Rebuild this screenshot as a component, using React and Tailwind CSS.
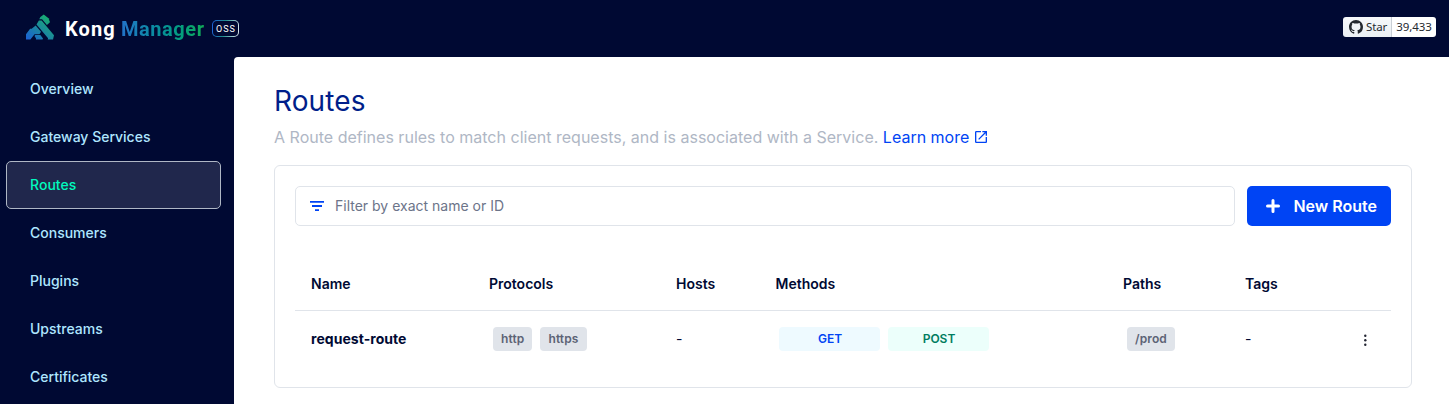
import React from "react";
import { SiKong } from "react-icons/si";
import { MdOpenInNew } from "react-icons/md";

const NAV = ["Overview", "Gateway Services", "Routes", "Consumers", "Plugins", "Upstreams", "Certificates"];

function GithubMark() {
  return (
    <svg viewBox="0 0 16 16" className="h-[14px] w-[14px]" fill="#24292f">
      <path d="M8 0C3.58 0 0 3.58 0 8c0 3.54 2.29 6.53 5.47 7.59.4.07.55-.17.55-.38 0-.19-.01-.82-.01-1.49-2.01.37-2.53-.49-2.69-.94-.09-.23-.48-.94-.82-1.13-.28-.15-.68-.52-.01-.53.63-.01 1.08.58 1.23.82.72 1.21 1.87.87 2.33.66.07-.52.28-.87.51-1.07-1.78-.2-3.64-.89-3.64-3.95 0-.87.31-1.59.82-2.15-.08-.2-.36-1.02.08-2.12 0 0 .67-.21 2.2.82.64-.18 1.32-.27 2-.27s1.36.09 2 .27c1.53-1.04 2.2-.82 2.2-.82.44 1.1.16 1.92.08 2.12.51.56.82 1.27.82 2.15 0 3.07-1.87 3.75-3.65 3.95.29.25.54.73.54 1.48 0 1.07-.01 1.93-.01 2.2 0 .21.15.46.55.38A8.01 8.01 0 0 0 16 8c0-4.42-3.58-8-8-8z" />
    </svg>
  );
}

function Header() {
  return (
    <header className="flex h-[57px] shrink-0 items-start justify-between pr-[13px]">
      <div className="flex h-[57px] items-center pl-[26px]">
        <svg className="h-0 w-0" aria-hidden="true">
          <defs>
            <linearGradient id="kong" x1="0" y1="1" x2="0.9" y2="0">
              <stop offset="0" stopColor="#1a5fd8" />
              <stop offset="0.5" stopColor="#1b8a9b" />
              <stop offset="1" stopColor="#17b864" />
            </linearGradient>
          </defs>
        </svg>
        <SiKong className="mb-[3px] h-[28px] w-[28px]" fill="url(#kong)" />
        <div className="ml-[11px] flex items-center whitespace-nowrap font-['Roboto',sans-serif] text-[20px] leading-[24px]">
          <span className="w-[56px] font-bold tracking-[1.1px] text-white">Kong</span>
          <span className="w-[84px] bg-gradient-to-r from-[#2272c8] to-[#12ab55] bg-clip-text font-bold tracking-[0.55px] text-transparent">Manager</span>
        </div>
        <span className="mb-px ml-[7px] flex h-[17px] w-[27px] rounded-[5px] bg-[linear-gradient(100deg,#1e5fe0,#1d8c8c_45%,#e8eef5)] p-px">
          <span className="flex flex-1 items-center justify-center rounded-[4px] bg-[#000933] pl-px pt-[2px] font-['Roboto',sans-serif] text-[9px] leading-[9px] tracking-[1px] text-white">OSS</span>
        </span>
      </div>
      <div className="mt-[17px] flex h-5 overflow-hidden rounded-[3px] font-['Noto_Sans',sans-serif] text-[11.5px] leading-5 tracking-[-0.1px] text-[#24292f]">
        <span className="flex w-[49px] items-center gap-[3px] border-r border-[#c9cfd5] bg-gradient-to-b from-[#f6f8fa] to-[#ebf0f4] pl-[6px]">
          <GithubMark />
          Star
        </span>
        <span className="w-[44px] bg-white text-center">39,433</span>
      </div>
    </header>
  );
}

function Sidebar() {
  return (
    <nav className="flex w-[234px] shrink-0 flex-col pl-[6px] pr-[13px] pt-2">
      {NAV.map((item) => (
        <a
          key={item}
          className={
            item === "Routes"
              ? "flex h-12 shrink-0 items-center rounded-[5px] border border-[#afb7c5] bg-[#20274c] pb-[2px] pl-[23px] text-[14px] font-medium tracking-[0.02px] text-[#00fabe]"
              : "flex h-12 shrink-0 items-center pb-[2px] pl-6 text-[14px] font-medium text-[#afe6ff]"
          }
        >
          {item}
        </a>
      ))}
    </nav>
  );
}

function Badge({ children }) {
  return <span className="flex h-6 items-center rounded-[4px] bg-[#e0e4ea] px-2 text-[12px] font-semibold tracking-[0.12px] text-[#5c6375]">{children}</span>;
}

const COLS = "grid grid-cols-[178px_187px_99.5px_347.5px_122px_1fr] pl-4";

function RoutesTable() {
  return (
    <div className="mt-8 text-[14px] text-[#000933]">
      <div className={`${COLS} h-[53px] items-center border-b border-[#e0e4ea] pb-[2px] font-semibold`}>
        <span>Name</span>
        <span>Protocols</span>
        <span>Hosts</span>
        <span>Methods</span>
        <span>Paths</span>
        <span>Tags</span>
      </div>
      <div className={`${COLS} h-14 items-center`}>
        <span className="pb-[2px] font-bold tracking-[0.05px]">request-route</span>
        <span className="flex gap-2 pl-1">
          <Badge>http</Badge>
          <Badge>https</Badge>
        </span>
        <span className="pb-[2px]">-</span>
        <span className="flex gap-[8px] pl-[3.5px] text-[12px] font-semibold">
          <span className="flex h-6 w-[101px] items-center justify-center rounded-[4px] bg-[#eefaff] pl-px text-[#0044f4]">GET</span>
          <span className="flex h-6 w-[101px] items-center justify-center rounded-[4px] bg-[#ecfffb] pl-px text-[#007d60]">POST</span>
        </span>
        <span className="flex pl-1">
          <Badge>/prod</Badge>
        </span>
        <span className="flex items-center justify-between pr-[18px]">
          <span className="pb-[2px]">-</span>
          <svg viewBox="0 0 16 16" className="mt-0.5 h-4 w-4" fill="#232633">
            <circle cx="8.3" cy="3.7" r="1.2" />
            <circle cx="8.3" cy="8.2" r="1.2" />
            <circle cx="8.3" cy="12.7" r="1.2" />
          </svg>
        </span>
      </div>
    </div>
  );
}

export default function App() {
  return (
    <div className="flex h-[404px] w-[1449px] flex-col overflow-hidden bg-[#000933] font-['Inter',sans-serif]">
      <Header />
      <div className="flex min-h-0 flex-1">
        <Sidebar />
        <main className="flex-1 rounded-tl-[4px] bg-white pl-10 pr-[37px] pt-[26px]">
          <h1 className="text-[28px] leading-9 tracking-[0.1px] text-[#001e8a]">Routes</h1>
          <p className="mt-[6px] flex items-center text-[16px] leading-6 text-[#afb7c5]">
            <span className="tracking-[0.01px]">A Route defines rules to match client requests, and is associated with a Service.</span>
            <a className="ml-[4.5px] flex items-center gap-1 text-[#0044f4]">
              Learn more
              <MdOpenInNew className="h-4 w-4" />
            </a>
          </p>
          <section className="mt-4 h-[223px] rounded-[6px] border border-[#e0e4ea] p-5">
            <div className="flex gap-3">
              <label className="flex h-10 flex-1 items-center gap-[11px] rounded-[5px] border border-[#e0e4ea] pb-[2px] pl-[14px] text-[14px] text-[#6c7489]">
                <svg viewBox="0 0 14 10" className="mt-px h-[10px] w-[14px]" fill="#0044f4">
                  <path d="M0 0h14v1.8H0zM2 4.1h10v1.8H2zM5 8.2h4V10H5z" />
                </svg>
                Filter by exact name or ID
              </label>
              <button className="flex h-10 w-36 items-center justify-between rounded-[5px] bg-[#0044f4] pl-[19px] pr-[14px] text-[16px] font-semibold text-white">
                <svg viewBox="0 0 14 14" className="h-[14px] w-[14px]" stroke="white" strokeWidth="3" strokeLinecap="round">
                  <path d="M7 1.5v11M1.5 7h11" />
                </svg>
                New Route
              </button>
            </div>
            <RoutesTable />
          </section>
        </main>
      </div>
    </div>
  );
}
